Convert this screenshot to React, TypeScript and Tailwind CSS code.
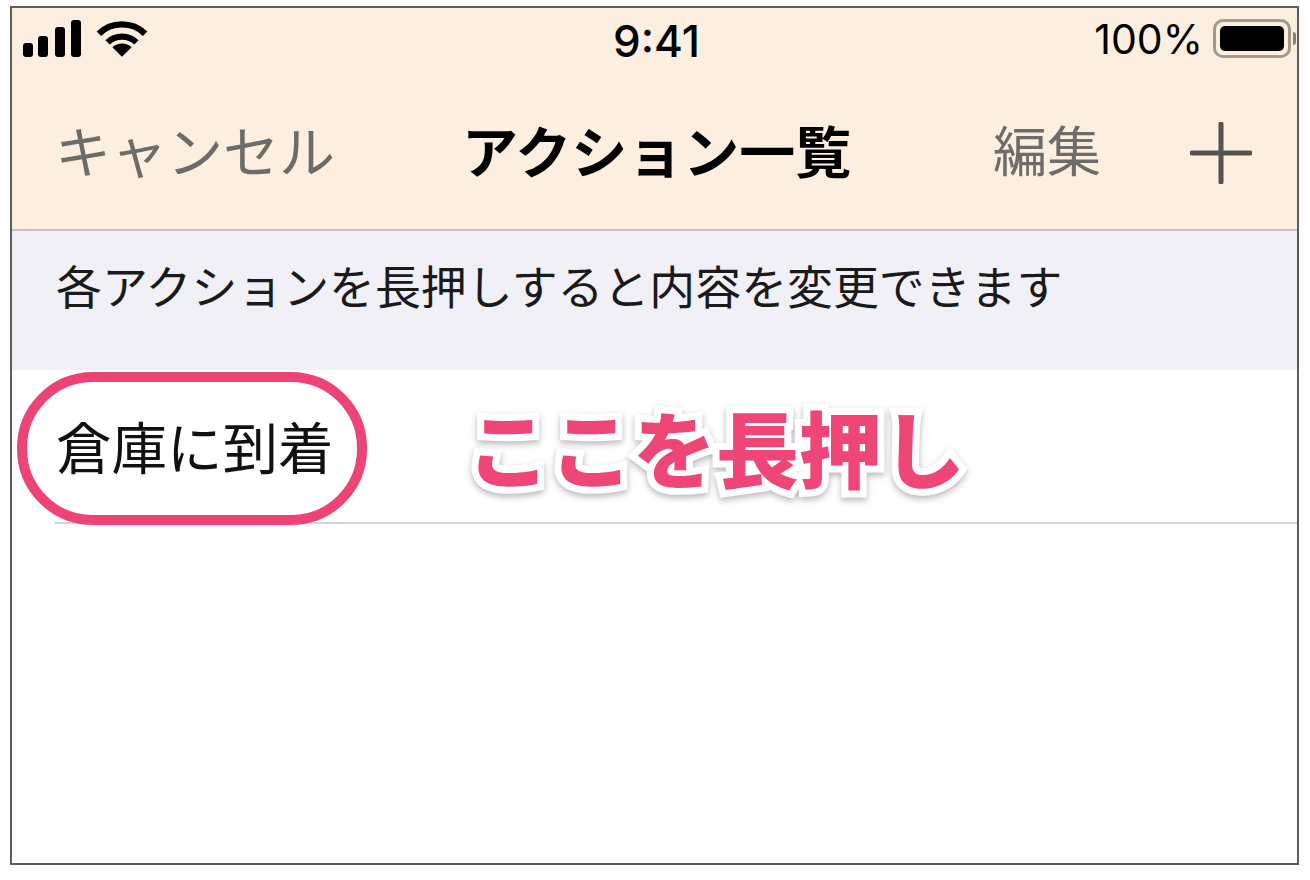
// App.tsx

const cjk = "font-['Noto_Sans_CJK_JP','Noto_Sans',sans-serif]";

function SignalIcon() {
  return (
    <svg width="58" height="37" viewBox="0 0 58 37" fill="#000">
      <rect x="0" y="23" width="10" height="14" rx="3" />
      <rect x="15" y="16" width="10" height="21" rx="3" />
      <rect x="32" y="7" width="10" height="30" rx="3" />
      <rect x="48" y="0" width="10" height="37" rx="3" />
    </svg>
  );
}

function WifiIcon() {
  return (
    <svg width="52" height="39" viewBox="0 0 54 40" fill="none" stroke="#000" strokeWidth="6.5">
      <path d="M3 15 C16 2 38 2 51 15" />
      <path d="M12 24 C20 16 34 16 42 24" />
      <path d="M17 29 L27 39 L37 29 C31 24 23 24 17 29 Z" fill="#000" stroke="none" />
    </svg>
  );
}

function BatteryIcon() {
  return (
    <div className="flex items-center">
      <div className="w-[78px] h-[39px] rounded-[10px] border-[3px] border-[#a39a8c] p-[4px]">
        <div className="w-full h-full rounded-[5px] bg-black" />
      </div>
      <div className="w-[3px] h-[13px] rounded-r-sm bg-[#8a8175] ml-[2px]" />
    </div>
  );
}

function PlusIcon() {
  return (
    <svg width="62" height="62" viewBox="0 0 62 62" stroke="#555350" strokeWidth="5" strokeLinecap="round">
      <path d="M31 2 V60" />
      <path d="M2 31 H60" />
    </svg>
  );
}

export default function App() {
  return (
    <div className={`w-[1310px] h-[880px] bg-white pl-[10px] pt-[6px] overflow-hidden ${cjk}`}>
      <div className="w-[1289px] h-[859px] border-2 border-[#5c5c5c] bg-white flex flex-col overflow-hidden">
        <div className="h-[223px] bg-[#fcefdf] border-b-2 border-[#c5c5c5] shrink-0">
          {/* status bar */}
          <div className="relative h-[61px] flex items-center justify-between pl-[11px] pr-[1px]">
            <div className="flex items-center gap-[15px]">
              <SignalIcon />
              <WifiIcon />
            </div>
            <div className="absolute left-[601px] top-[8px] text-[44px] leading-[50px] font-medium text-black font-['Inter',sans-serif]">
              9:41
            </div>
            <div className="flex items-center gap-[10px]">
              <span className="text-[41px] leading-[50px] text-black font-['Inter',sans-serif]">100%</span>
              <BatteryIcon />
            </div>
          </div>
          {/* nav bar */}
          <div className="flex items-center h-[140px] mt-[14px] pl-[43px]">
            <span className="w-[407px] pb-[8px] text-[56px] leading-[70px] text-[#6e6c69]">キャンセル</span>
            <span className="w-[531px] pb-[8px] text-[56px] leading-[70px] font-bold text-black">アクション一覧</span>
            <span className="w-[197px] pb-[8px] text-[54px] leading-[70px] text-[#6e6c69]">編集</span>
            <PlusIcon />
          </div>
        </div>

        <div className="h-[139px] bg-[#f0f0f6] pl-[44px] pt-[20px] shrink-0">
          <p className="text-[45.9px] leading-[66px] text-[#1a1a1a]">各アクションを長押しすると内容を変更できます</p>
        </div>

        <div className="relative h-[154px] ml-[43px] border-b-2 border-[#d4d4d4] flex items-center shrink-0">
          <span className="ml-[1px] w-[411px] pb-[3px] text-[55.5px] leading-[70px] text-[#111]">倉庫に到着</span>
          <span className="text-[83px] leading-[100px] font-black text-[#ee4677] [-webkit-text-stroke:14px_#ffffff] [paint-order:stroke_fill] [filter:drop-shadow(0_3px_3px_rgba(0,0,0,0.28))]">
            ここを長押し
          </span>
          <div className="absolute left-[-38px] top-[2px] w-[350px] h-[153px] rounded-[76px] border-[10px] border-[#ee4475]" />
        </div>
      </div>
    </div>
  );
}
